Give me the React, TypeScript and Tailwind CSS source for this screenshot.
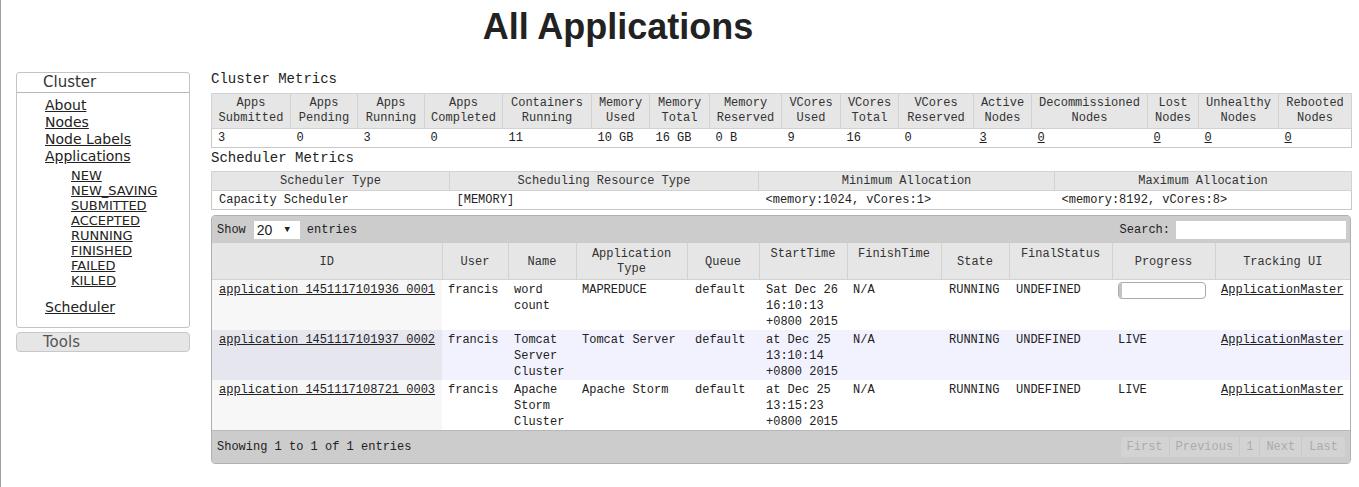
import React from "react";

const mono = "font-['Liberation_Mono','DejaVu_Sans_Mono',monospace]";
const sans = "font-['DejaVu_Sans','Liberation_Sans',sans-serif]";

const clusterCols = [
  { w: 79, h: ["Apps", "Submitted"], v: "3" },
  { w: 67, h: ["Apps", "Pending"], v: "0" },
  { w: 67, h: ["Apps", "Running"], v: "3" },
  { w: 78, h: ["Apps", "Completed"], v: "0" },
  { w: 89, h: ["Containers", "Running"], v: "11" },
  { w: 58, h: ["Memory", "Used"], v: "10 GB" },
  { w: 60, h: ["Memory", "Total"], v: "16 GB" },
  { w: 72, h: ["Memory", "Reserved"], v: "0 B" },
  { w: 59, h: ["VCores", "Used"], v: "9" },
  { w: 58, h: ["VCores", "Total"], v: "16" },
  { w: 75, h: ["VCores", "Reserved"], v: "0" },
  { w: 58, h: ["Active", "Nodes"], v: "3", link: true },
  { w: 116, h: ["Decommissioned", "Nodes"], v: "0", link: true },
  { w: 51, h: ["Lost", "Nodes"], v: "0", link: true },
  { w: 80, h: ["Unhealthy", "Nodes"], v: "0", link: true },
  { w: 73, h: ["Rebooted", "Nodes"], v: "0", link: true },
];

const schedCols = [
  { w: 238, h: "Scheduler Type", v: "Capacity Scheduler" },
  { w: 309, h: "Scheduling Resource Type", v: "[MEMORY]" },
  { w: 296, h: "Minimum Allocation", v: "<memory:1024, vCores:1>" },
  { w: 297, h: "Maximum Allocation", v: "<memory:8192, vCores:8>" },
];

const appCols: { w: number; h: string[] }[] = [
  { w: 230, h: ["ID"] },
  { w: 66, h: ["User"] },
  { w: 68, h: ["Name"] },
  { w: 111, h: ["Application", "Type"] },
  { w: 72, h: ["Queue"] },
  { w: 88, h: ["StartTime", "\u00a0"] },
  { w: 94, h: ["FinishTime", "\u00a0"] },
  { w: 68, h: ["State"] },
  { w: 103, h: ["FinalStatus", "\u00a0"] },
  { w: 103, h: ["Progress"] },
  { w: 135, h: ["Tracking UI"] },
];

const apps = [
  {
    id: "application_1451117101936_0001",
    name: "word count",
    type: "MAPREDUCE",
    start: "Sat Dec 26 16:10:13 +0800 2015",
    progress: "bar",
    row: "bg-white",
    idBg: "bg-[#f7f7f7]",
  },
  {
    id: "application_1451117101937_0002",
    name: "Tomcat Server Cluster",
    type: "Tomcat Server",
    start: "at Dec 25 13:10:14 +0800 2015",
    progress: "LIVE",
    row: "bg-[#f2f2ff]",
    idBg: "bg-[#e6e6ef]",
  },
  {
    id: "application_1451117108721_0003",
    name: "Apache Storm Cluster",
    type: "Apache Storm",
    start: "at Dec 25 13:15:23 +0800 2015",
    progress: "LIVE",
    row: "bg-white",
    idBg: "bg-[#f7f7f7]",
  },
];

const states = ["NEW", "NEW_SAVING", "SUBMITTED", "ACCEPTED", "RUNNING", "FINISHED", "FAILED", "KILLED"];

function Sidebar() {
  return (
    <div className={`${sans} ml-[15px] mt-[3px] w-[174px] shrink-0`}>
      <div className="border border-[#c4c4c4] rounded-[3px]">
        <div className="border-b border-[#b8b8b8] pl-[26px] text-[15px] leading-[19px] text-[#333]">Cluster</div>
        <div className="pl-[28px] pt-[4px] pb-[11px]">
          {["About", "Nodes", "Node Labels", "Applications"].map((l) => (
            <div key={l} className="text-[14px] leading-[17px]">
              <a href="#" className="text-[#222] underline">{l}</a>
            </div>
          ))}
          <div className="pl-[26px] pt-[3px]">
            {states.map((s) => (
              <div key={s} className="text-[13px] leading-[15px]">
                <a href="#" className="text-[#222] underline">{s}</a>
              </div>
            ))}
          </div>
          <div className="mt-[11px] text-[14px] leading-[17px]">
            <a href="#" className="text-[#222] underline">Scheduler</a>
          </div>
        </div>
      </div>
      <div className="mt-[4px] h-[20px] border border-[#c8c8c8] bg-[#e6e6e6] rounded-[4px] pl-[26px] text-[15px] leading-[18px] text-[#555]">
        Tools
      </div>
    </div>
  );
}

function ClusterMetrics() {
  return (
    <table className="w-[1140px] table-fixed border-collapse border border-[#c8c8c8] text-[12px]">
      <colgroup>
        {clusterCols.map((c, i) => (
          <col key={i} style={{ width: c.w }} />
        ))}
      </colgroup>
      <thead>
        <tr className="bg-[#e6e6e6]">
          {clusterCols.map((c, i) => (
            <th key={i} className="border border-[#d2d2d2] font-normal text-center text-[#333] leading-[15px] py-[2px] px-0 whitespace-nowrap">
              {c.h[0]}
              <br />
              {c.h[1]}
            </th>
          ))}
        </tr>
      </thead>
      <tbody>
        <tr className="bg-white">
          {clusterCols.map((c, i) => (
            <td key={i} className="pl-[6px] leading-[16px] py-[1px] text-[#222]">
              {c.link ? <a href="#" className="underline">{c.v}</a> : c.v}
            </td>
          ))}
        </tr>
      </tbody>
    </table>
  );
}

function SchedulerMetrics() {
  return (
    <table className="w-[1140px] table-fixed border-collapse border border-[#c8c8c8] text-[12px]">
      <colgroup>
        {schedCols.map((c, i) => (
          <col key={i} style={{ width: c.w }} />
        ))}
      </colgroup>
      <thead>
        <tr className="bg-[#e6e6e6]">
          {schedCols.map((c, i) => (
            <th key={i} className="border border-[#d2d2d2] font-normal text-center text-[#333] leading-[16px] py-[1px]">
              {c.h}
            </th>
          ))}
        </tr>
      </thead>
      <tbody>
        <tr className="bg-white">
          {schedCols.map((c, i) => (
            <td key={i} className="pl-[7px] leading-[16px] py-[1px] text-[#222]">
              {c.v}
            </td>
          ))}
        </tr>
      </tbody>
    </table>
  );
}

function AppsTable() {
  return (
    <div className="w-[1140px] border border-[#b0b0b0] rounded-[4px] overflow-hidden text-[12px]">
      <div className="h-[27px] bg-[#cccccc] flex items-center justify-between pl-[5px] pr-[4px] text-[#222]">
        <div className="flex items-center">
          <span>Show</span>
          <span className="ml-[8px] mr-[7px] w-[46px] h-[18px] bg-white flex items-center justify-between pl-[3px] pr-[10px]">
            <span className="font-['Liberation_Sans',sans-serif] text-[14px] leading-[18px]">20</span>
            <span className="text-[9px] leading-[18px]">▼</span>
          </span>
          <span>entries</span>
        </div>
        <div className="flex items-center">
          <span>Search:</span>
          <span className="ml-[6px] w-[170px] h-[18px] bg-white" />
        </div>
      </div>
      <table className="w-full table-fixed border-collapse">
        <colgroup>
          {appCols.map((c, i) => (
            <col key={i} style={{ width: c.w }} />
          ))}
        </colgroup>
        <thead>
          <tr className="bg-[#e6e6e6]">
            {appCols.map((c, i) => (
              <th
                key={i}
                className="border-x border-b border-[#d2d2d2] first:border-l-0 last:border-r-0 font-normal text-center text-[#333] leading-[15px] pt-[4px] pb-[2px] h-[36px] align-middle"
              >
                {c.h.map((t, j) => (
                  <div key={j}>{t}</div>
                ))}
              </th>
            ))}
          </tr>
        </thead>
        <tbody>
          {apps.map((a) => (
            <tr key={a.id} className={`${a.row} h-[50px] align-top text-[#222] leading-[16px]`}>
              <td className={`${a.idBg} pl-[7px] pt-[2px]`}>
                <a href="#" className="underline">{a.id}</a>
              </td>
              <td className="pl-[6px] pt-[2px]">francis</td>
              <td className="pl-[6px] pt-[2px] pr-[2px]">{a.name}</td>
              <td className="pl-[6px] pt-[2px]">{a.type}</td>
              <td className="pl-[8px] pt-[2px]">default</td>
              <td className="pl-[7px] pt-[2px] pr-[1px]">{a.start}</td>
              <td className="pl-[6px] pt-[2px]">N/A</td>
              <td className="pl-[8px] pt-[2px]">RUNNING</td>
              <td className="pl-[7px] pt-[2px]">UNDEFINED</td>
              <td className="pl-[6px] pt-[2px]">
                {a.progress === "bar" ? (
                  <div className="w-[88px] h-[17px] border border-[#aaa] rounded-[4px] bg-white overflow-hidden flex">
                    <div className="w-[3px] h-full bg-[#c4c4c4]" />
                  </div>
                ) : (
                  a.progress
                )}
              </td>
              <td className="pl-[6px] pt-[2px]">
                <a href="#" className="underline">ApplicationMaster</a>
              </td>
            </tr>
          ))}
        </tbody>
      </table>
      <div className="h-[33px] bg-[#cccccc] border-t border-[#b8b8b8] flex items-center justify-between pl-[5px] pr-[5px] text-[#222]">
        <span>Showing 1 to 1 of 1 entries</span>
        <div className="flex h-[20px] rounded-[3px] overflow-hidden bg-[#d3d3d3] text-[#ababab] leading-[20px]">
          <span className="px-[6px] border-r border-[#c8c8c8]">First</span>
          <span className="px-[6px] border-r border-[#c8c8c8]">Previous</span>
          <span className="px-[6px] border-r border-[#c8c8c8]">1</span>
          <span className="px-[6px] border-r border-[#c8c8c8]">Next</span>
          <span className="px-[7px]">Last</span>
        </div>
      </div>
    </div>
  );
}

export default function App() {
  return (
    <div className="min-h-[487px] w-[1359px] bg-white border-l border-[#a0a0a0] text-[#222]">
      <div className="flex">
        <h1 className="flex-1 text-center font-['Liberation_Sans',Arial,sans-serif] font-bold text-[36px] leading-[41px] pt-[6px] text-[#222]">
          All Applications
        </h1>
        <div className="w-[124px]" />
      </div>
      <div className="flex mt-[22px]">
        <Sidebar />
        <div className={`${mono} ml-[21px]`}>
          <h3 className="text-[14px] leading-[20px] font-normal mb-[4px] text-[#222]">Cluster Metrics</h3>
          <ClusterMetrics />
          <h3 className="text-[14px] leading-[20px] font-normal mb-[3px] text-[#222]">Scheduler Metrics</h3>
          <SchedulerMetrics />
          <div className="mt-[5px]">
            <AppsTable />
          </div>
        </div>
      </div>
    </div>
  );
}
